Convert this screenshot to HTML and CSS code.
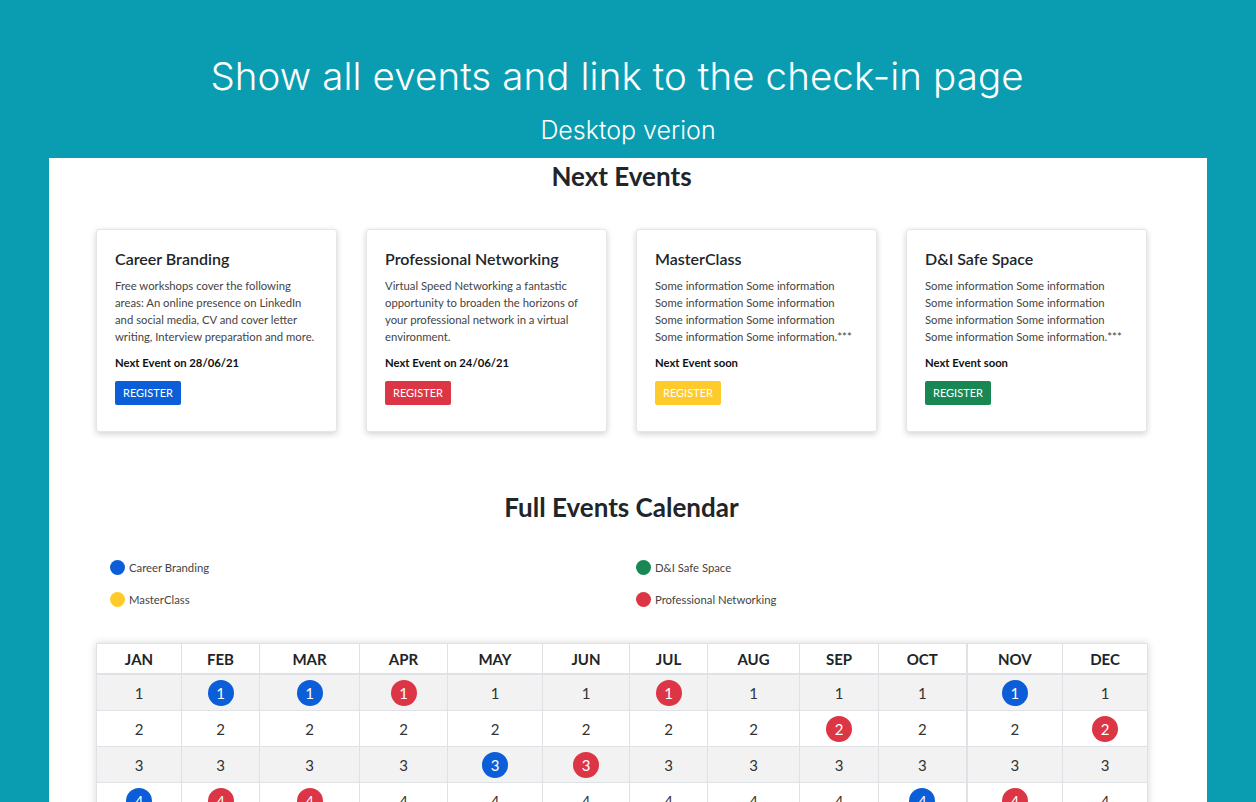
FILE: index.html
```html
<!DOCTYPE html>
<html lang="en">
<head>
<meta charset="utf-8">
<title>Events</title>
<link rel="stylesheet" href="styles.css">
</head>
<body>
<header class="banner">
  <h1 class="banner-title">Show all events and link to the check-in page</h1>
  <p class="banner-sub">Desktop verion</p>
</header>
<main class="panel">
  <h2 class="section-title">Next Events</h2>
  <div class="cards">
    <div class="card">
      <h3 class="card-title">Career Branding</h3>
      <p class="card-text">Free workshops cover the following areas: An online presence on LinkedIn and social media, CV and cover letter writing, Interview preparation and more.</p>
      <p class="card-next">Next Event on 28/06/21</p>
      <a class="btn btn-blue">REGISTER</a>
    </div>
    <div class="card">
      <h3 class="card-title">Professional Networking</h3>
      <p class="card-text">Virtual Speed Networking a fantastic opportunity to broaden the horizons of your professional network in a virtual environment.</p>
      <p class="card-next">Next Event on 24/06/21</p>
      <a class="btn btn-red">REGISTER</a>
    </div>
    <div class="card">
      <h3 class="card-title">MasterClass</h3>
      <p class="card-text">Some information Some information Some information Some information Some information Some information Some information Some information.***</p>
      <p class="card-next">Next Event soon</p>
      <a class="btn btn-yellow">REGISTER</a>
    </div>
    <div class="card">
      <h3 class="card-title">D&amp;I Safe Space</h3>
      <p class="card-text">Some information Some information Some information Some information Some information Some information Some information Some information.***</p>
      <p class="card-next">Next Event soon</p>
      <a class="btn btn-green">REGISTER</a>
    </div>
  </div>

  <h2 class="section-title calendar-title">Full Events Calendar</h2>
  <ul class="legend">
    <li class="legend-item"><span class="dot dot-blue"></span>Career Branding</li>
    <li class="legend-item"><span class="dot dot-green"></span>D&amp;I Safe Space</li>
    <li class="legend-item"><span class="dot dot-yellow"></span>MasterClass</li>
    <li class="legend-item"><span class="dot dot-red"></span>Professional Networking</li>
  </ul>

  <table class="calendar">
    <colgroup>
      <col class="c-jan"><col class="c-feb"><col class="c-mar"><col class="c-apr"><col class="c-may"><col class="c-jun"><col class="c-jul"><col class="c-aug"><col class="c-sep"><col class="c-oct"><col class="c-nov"><col class="c-dec">
    </colgroup>
    <thead>
      <tr><th>JAN</th><th>FEB</th><th>MAR</th><th>APR</th><th>MAY</th><th>JUN</th><th>JUL</th><th>AUG</th><th>SEP</th><th>OCT</th><th class="split">NOV</th><th>DEC</th></tr>
    </thead>
    <tbody>
      <tr><td>1</td><td><span class="ev ev-blue">1</span></td><td><span class="ev ev-blue">1</span></td><td><span class="ev ev-red">1</span></td><td>1</td><td>1</td><td><span class="ev ev-red">1</span></td><td>1</td><td>1</td><td>1</td><td class="split"><span class="ev ev-blue">1</span></td><td>1</td></tr>
      <tr><td>2</td><td>2</td><td>2</td><td>2</td><td>2</td><td>2</td><td>2</td><td>2</td><td><span class="ev ev-red">2</span></td><td>2</td><td class="split">2</td><td><span class="ev ev-red">2</span></td></tr>
      <tr><td>3</td><td>3</td><td>3</td><td>3</td><td><span class="ev ev-blue">3</span></td><td><span class="ev ev-red">3</span></td><td>3</td><td>3</td><td>3</td><td>3</td><td class="split">3</td><td>3</td></tr>
      <tr><td><span class="ev ev-blue">4</span></td><td><span class="ev ev-red">4</span></td><td><span class="ev ev-red">4</span></td><td>4</td><td>4</td><td>4</td><td>4</td><td>4</td><td>4</td><td><span class="ev ev-blue">4</span></td><td class="split"><span class="ev ev-red">4</span></td><td>4</td></tr>
      <tr><td>5</td><td>5</td><td>5</td><td>5</td><td>5</td><td>5</td><td>5</td><td>5</td><td>5</td><td>5</td><td class="split">5</td><td>5</td></tr>
      <tr><td>6</td><td>6</td><td>6</td><td>6</td><td>6</td><td>6</td><td>6</td><td>6</td><td>6</td><td>6</td><td class="split">6</td><td>6</td></tr>
    </tbody>
  </table>
</main>
</body>
</html>
```

FILE: styles.css
```css
html, body {
  margin: 0;
  padding: 0;
}
body {
  background: #0a9db1;
  font-family: "Lato", "Open Sans", sans-serif;
  color: #212529;
}
.banner {
  padding: 50px 0 13px;
  text-align: center;
  color: #ffffff;
  font-family: "Inter", "Lato", sans-serif;
}
.banner-title {
  margin: 0 0 0 -22px;
  font-size: 38.5px;
  line-height: 52px;
  font-weight: 300;
  letter-spacing: 0.1px;
}
.banner-sub {
  margin: 13px 0 0;
  font-size: 25px;
  line-height: 30px;
  font-weight: 300;
}
.panel {
  display: block;
  margin: 0 49px;
  background: #ffffff;
  padding: 0 60px 40px 47px;
  min-height: 700px;
}
.section-title {
  margin: 0;
  text-align: center;
  font-size: 26px;
  line-height: 36px;
  font-weight: 700;
  color: #212529;
}
.cards {
  display: grid;
  grid-template-columns: repeat(4, 1fr);
  column-gap: 29px;
  margin-top: 35px;
}
.card {
  height: 203px;
  box-sizing: border-box;
  border: 1px solid #e6e6e6;
  border-radius: 3px;
  box-shadow: 0 2px 6px rgba(0, 0, 0, 0.18);
  padding: 19px 18px 0;
  background: #ffffff;
}
.card-title {
  margin: 0;
  font-size: 16px;
  line-height: 20px;
  font-weight: 600;
  color: #212529;
}
.card-text {
  margin: 8px 0 0;
  font-size: 11.3px;
  line-height: 17px;
  color: #444;
}
.card-next {
  margin: 9px 0 0;
  font-size: 11.3px;
  line-height: 17px;
  font-weight: 700;
  color: #111;
}
.btn {
  display: inline-block;
  margin-top: 10px;
  height: 24px;
  line-height: 24px;
  padding: 0 8px;
  border-radius: 2px;
  font-size: 11px;
  color: #ffffff;
}
.btn-blue { background: #0b5ed7; }
.btn-red { background: #dc3545; }
.btn-yellow { background: #ffca2c; }
.btn-green { background: #198754; }

.calendar-title {
  margin-top: 57px;
}
.legend {
  list-style: none;
  margin: 32px 0 0;
  padding: 0 0 0 14px;
  display: grid;
  grid-template-columns: 526px 1fr;
  row-gap: 12px;
}
.legend-item {
  display: flex;
  align-items: center;
  height: 20px;
  font-size: 11.3px;
  color: #444;
}
.dot {
  width: 15px;
  height: 15px;
  border-radius: 50%;
  margin-right: 4px;
  flex: none;
}
.dot-blue { background: #0b5ed7; }
.dot-green { background: #198754; }
.dot-yellow { background: #ffca2c; }
.dot-red { background: #dc3545; }

.calendar {
  margin-top: 34px;
  width: 1051px;
  border-collapse: collapse;
  table-layout: fixed;
  box-shadow: 0 0 8px rgba(0, 0, 0, 0.16);
  font-size: 15px;
}
.c-jan { width: 85px; }
.c-feb { width: 78px; }
.c-mar { width: 100px; }
.c-apr { width: 88px; }
.c-may { width: 95px; }
.c-jun { width: 87px; }
.c-jul { width: 78px; }
.c-aug { width: 92px; }
.c-sep { width: 79px; }
.c-oct { width: 88px; }
.c-nov { width: 96px; }
.c-dec { width: 85px; }
.calendar th, .calendar td {
  border: 1px solid #dee2e6;
  text-align: center;
  padding: 0;
}
.calendar th {
  height: 29px;
  font-weight: 700;
  color: #212529;
  border-bottom: 2px solid #dee2e6;
}
.calendar td {
  height: 35px;
  color: #333;
}
.calendar th.split, .calendar td.split {
  border-left: 2px solid #dee2e6;
}
.calendar tbody tr:nth-child(odd) td {
  background: #f2f2f2;
}
.ev {
  display: inline-flex;
  align-items: center;
  justify-content: center;
  width: 26px;
  height: 26px;
  border-radius: 50%;
  color: #ffffff;
  vertical-align: middle;
}
.ev-blue { background: #0b5ed7; }
.ev-red { background: #dc3545; }
```
